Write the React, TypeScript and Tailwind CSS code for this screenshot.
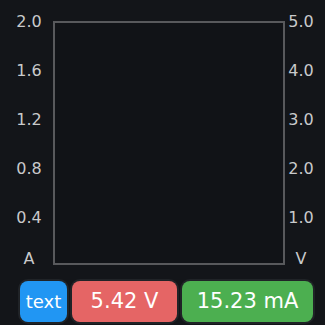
const leftTicks = ["2.0", "1.6", "1.2", "0.8", "0.4"];
const rightTicks = ["5.0", "4.0", "3.0", "2.0", "1.0"];

function Axis({ ticks, unit, className }: { ticks: string[]; unit: string; className: string }) {
  return (
    <div className={"flex flex-col items-center pt-[12px] text-[16px] leading-[20px] text-[#c9cacb] " + className}>
      {ticks.map((t) => (
        <div key={t} className="h-[20px] mb-[29px]">{t}</div>
      ))}
      <div className="h-[20px] -mt-[8px]">{unit}</div>
    </div>
  );
}

export default function App() {
  return (
    <div
      className="w-[325px] h-[325px] bg-[#131519] flex flex-col"
      style={{ fontFamily: '"DejaVu Sans", "Liberation Sans", sans-serif' }}
    >
      <div className="flex">
        <Axis ticks={leftTicks} unit="A" className="w-[44px] ml-[7px] mr-[2px]" />
        <div className="mt-[21px] w-[232px] h-[244px] border-2 border-[#58595c] bg-[#111317]" />
        <Axis ticks={rightTicks} unit="V" className="w-[30px] ml-[1px]" />
      </div>
      <div className="flex gap-[5px] pl-[20px] mt-[12px]">
        <div className="w-[47px] h-[41px] rounded-[8px] bg-[#2196f3] ring-2 ring-[#202327] flex items-center justify-center text-white text-[18px]">
          text
        </div>
        <div className="w-[105px] h-[41px] rounded-[8px] bg-[#e56565] ring-2 ring-[#202327] flex items-center justify-center text-white text-[21px]">
          5.42 V
        </div>
        <div className="w-[131px] h-[41px] rounded-[8px] bg-[#4caf50] ring-2 ring-[#202327] flex items-center justify-center text-white text-[21px]">
          15.23 mA
        </div>
      </div>
    </div>
  );
}
